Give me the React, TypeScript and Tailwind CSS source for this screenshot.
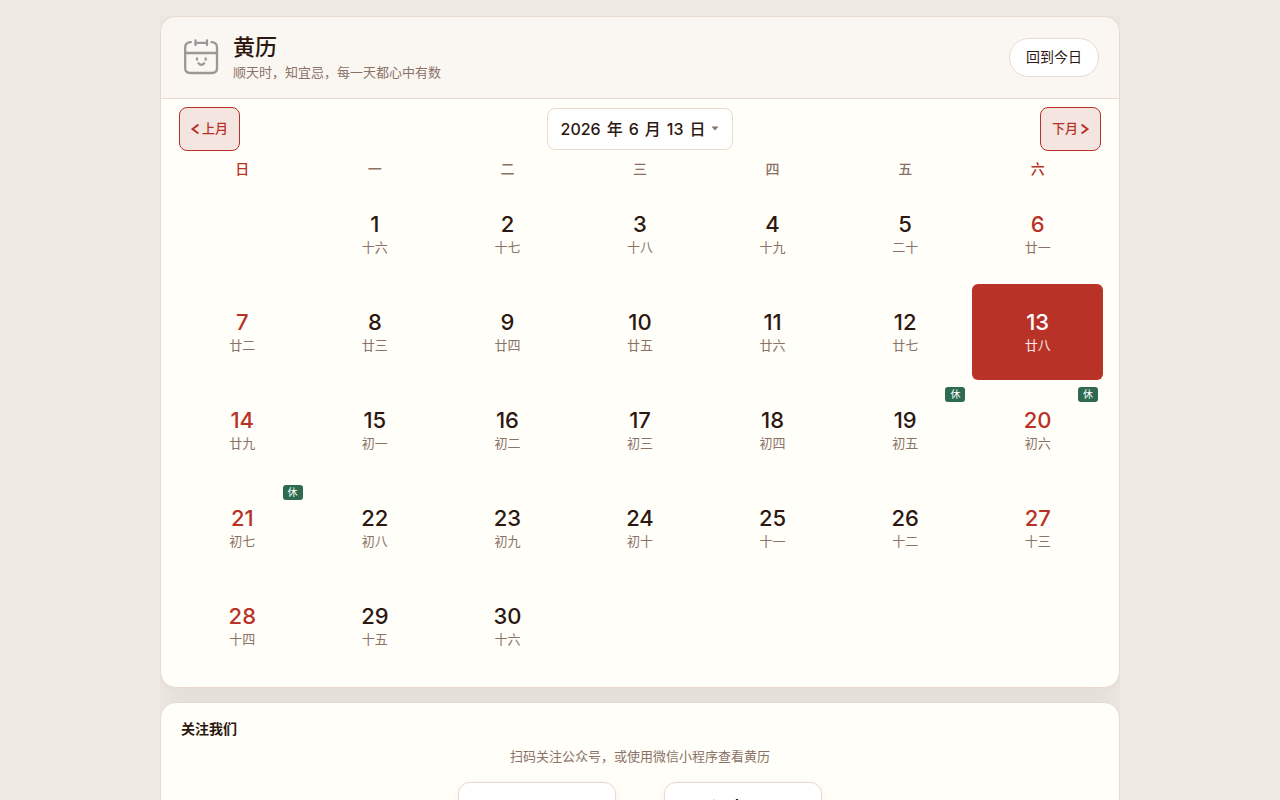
const weekdays = ['日', '一', '二', '三', '四', '五', '六'];

const lunar = [
  '十六', '十七', '十八', '十九', '二十', '廿一', '廿二', '廿三', '廿四', '廿五',
  '廿六', '廿七', '廿八', '廿九', '初一', '初二', '初三', '初四', '初五', '初六',
  '初七', '初八', '初九', '初十', '十一', '十二', '十三', '十四', '十五', '十六',
];

const restDays = [19, 20, 21];
const selected = 13;

function CalendarFace() {
  return (
    <svg
      viewBox="0 1 40 40"
      className="size-10 shrink-0"
      fill="none"
      stroke="#999896"
      strokeWidth="2.3"
      strokeLinecap="round"
      strokeLinejoin="round"
      aria-hidden="true"
    >
      <path d="M9.800 5.200H9Q4.200 5.700 4.200 10.500V31Q4.200 36 9.200 36H31Q36 36 36 31V10.500Q36 5.700 31.200 5.200H30.500" />
      <path d="M4.200 16H36" />
      <path d="M14.500 5.800H26M14.500 3.300V8M26 3.300V8" />
      <path d="M16 21.500V22.700M24.700 21.500V22.700" />
      <path d="M17.500 26.300Q20.300 29.300 23.200 26.300" />
    </svg>
  );
}

function Chevron({ d }: { d: string }) {
  return (
    <svg
      viewBox="0 0 8 12"
      className="h-3 w-2"
      fill="none"
      stroke="currentColor"
      strokeWidth="2"
      aria-hidden="true"
    >
      <path d={d} />
    </svg>
  );
}

function Day({ day }: { day: number }) {
  const weekend = day % 7 === 0 || day % 7 === 6;
  const active = day === selected;
  const tone = active ? 'text-white' : weekend ? 'text-[#b83228]' : 'text-[#2c1810]';
  return (
    <button
      type="button"
      aria-pressed={active}
      className={`relative flex h-24 flex-col items-center justify-center rounded-md pt-0.5 ${active ? 'bg-[#b83228]' : ''}`}
    >
      <span className={`text-[22px] leading-6 font-medium ${tone}`}>{day}</span>
      <span className={`text-[13px] leading-[22px] ${active ? 'text-white/90' : 'text-[#8b7266]'}`}>
        {lunar[day - 1]}
      </span>
      {restDays.includes(day) && (
        <span className="absolute top-[5px] right-[5px] rounded-[3px] bg-[#2d6a4f] px-[5px] text-[10px] leading-[15px] text-white">
          休
        </span>
      )}
    </button>
  );
}

export default function App() {
  const days = Array.from({ length: 30 }, (_, i) => i + 1);
  return (
    <div className="h-screen overflow-hidden bg-[#efeae3] font-['Inter','Noto_Sans_CJK_SC',sans-serif] text-[#2c1810]">
      <main className="mx-auto mt-4 flex max-w-[960px] flex-col gap-3.5 overflow-hidden">
        <section className="overflow-hidden rounded-2xl border border-[#e8dacf] bg-[#fffef9] shadow-[0_4px_24px_rgba(44,24,16,0.08)]">
          <header className="flex items-center justify-between border-b border-[#e8dacf] bg-[#faf7f3] px-5 py-[15px]">
            <div className="flex items-center gap-3">
              <CalendarFace />
              <div>
                <h1 className="text-[22px] leading-[30px] font-medium">黄历</h1>
                <p className="text-[13px] leading-[21px] text-[#8b7266]">顺天时，知宜忌，每一天都心中有数</p>
              </div>
            </div>
            <button type="button" className="rounded-full border border-[#e8dacf] bg-white px-4 pt-[7px] pb-[9px] text-sm leading-[21px]">
              回到今日
            </button>
          </header>

          <div className="px-4 pt-2 pb-[13px]">
            <nav className="flex items-center justify-between px-0.5" aria-label="月份">
              <button
                type="button"
                className="flex h-11 items-center gap-[3px] rounded-lg border border-[#b83228] bg-[#f4e5e1] px-[11px] pb-px text-[13px] font-medium text-[#b83228]"
              >
                <Chevron d="M7.500 1.500L1.500 6L7.500 10.500" />
                上月
              </button>
              <button
                type="button"
                className="flex h-[42px] items-center gap-1.5 rounded-lg border border-[#e8dacf] bg-white px-[13px] pb-px text-base font-medium"
              >
                <span>2026</span> <span>年</span> <span>6</span> <span>月</span> <span>13</span> <span>日</span>
                <svg viewBox="0 0 8 5" className="h-[5px] w-2" fill="#8b7266" aria-hidden="true">
                  <path d="M0.500 0.500H7.500L4 4.500Z" />
                </svg>
              </button>
              <button
                type="button"
                className="flex h-11 items-center gap-[3px] rounded-lg border border-[#b83228] bg-[#f4e5e1] px-[11px] pb-px text-[13px] font-medium text-[#b83228]"
              >
                下月
                <Chevron d="M0.500 1.500L6.500 6L0.500 10.500" />
              </button>
            </nav>

            <div className="grid grid-cols-7 gap-0.5 pt-[7px] pb-[7px]">
              {weekdays.map((name, i) => (
                <div
                  key={name}
                  className={`text-center text-sm leading-[21px] font-medium ${i % 6 === 0 ? 'text-[#b83228]' : 'text-[#8b7266]'}`}
                >
                  {name}
                </div>
              ))}
            </div>

            <div className="grid grid-cols-7 gap-0.5">
              <div />
              {days.map((day) => (
                <Day key={day} day={day} />
              ))}
            </div>
          </div>
        </section>

        <section className="rounded-2xl border border-[#e8dacf] bg-[#fffef9] px-5 py-4 shadow-[0_4px_24px_rgba(44,24,16,0.08)]">
          <h2 className="text-sm leading-5 font-bold">关注我们</h2>
          <p className="mt-[7px] text-center text-[13px] leading-5 text-[#8b7266]">
            扫码关注公众号，或使用微信小程序查看黄历
          </p>
          <div className="mt-4 flex justify-center gap-12">
            <div className="h-[158px] w-[158px] rounded-xl border border-[#e8dacf] bg-white shadow-[0_2px_8px_rgba(44,24,16,0.06)]" />
            <div className="h-[158px] w-[158px] rounded-xl border border-[#e8dacf] bg-white p-4 shadow-[0_2px_8px_rgba(44,24,16,0.06)]">
              <svg viewBox="0 0 124 124" className="size-full" stroke="#222" strokeWidth="2.500" strokeLinecap="round" aria-hidden="true">
                <path d="M56 1V10M33 2L36 9M76 4L74 12M92 12L87 19" />
              </svg>
            </div>
          </div>
        </section>
      </main>
    </div>
  );
}
